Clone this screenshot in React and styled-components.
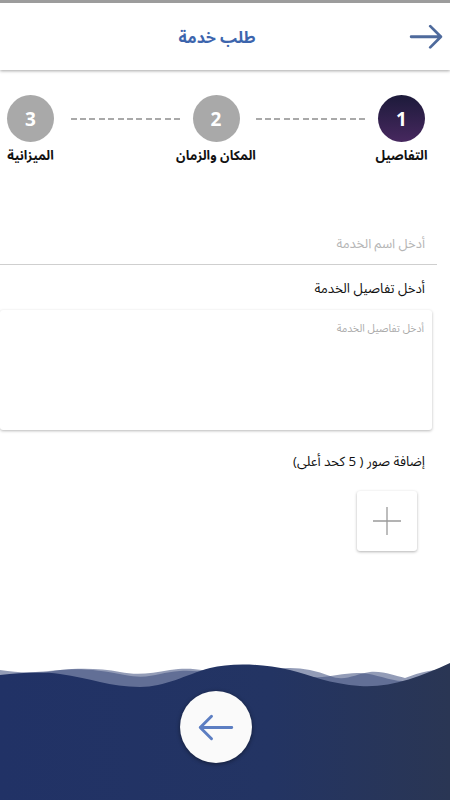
import React from 'react';
import styled, { createGlobalStyle } from 'styled-components';

const GlobalStyle = createGlobalStyle`
    html, body {
        margin: 0;
        padding: 0;
        background: #ffffff;
    }
    body {
        font-family: "Open Sans", "Noto Sans Arabic UI", sans-serif;
    }
    * {
        box-sizing: border-box;
    }
`;

const Page = styled.div`
    direction: rtl;
    width: 450px;
    min-height: 800px;
    display: flex;
    flex-direction: column;
    overflow: hidden;
`;

const Header = styled.header`
    height: 70px;
    border-top: 3px solid #9c9c9c;
    background: #ffffff;
    box-shadow: 0 1px 3px rgba(0, 0, 0, 0.35);
    display: flex;
    align-items: center;
    justify-content: center;
    position: relative;
    z-index: 1;
`;

const Title = styled.h1`
    margin: 0 16px 0 0;
    font-size: 16px;
    font-weight: 700;
    color: #3d65ad;
`;

const BackButton = styled.button`
    position: absolute;
    right: 6px;
    top: 50%;
    transform: translateY(-50%);
    border: 0;
    background: none;
    padding: 0;
    width: 36px;
    height: 30px;
    display: flex;
    align-items: center;
    justify-content: center;
    color: #4e6a9c;
`;

const StepRow = styled.div`
    display: flex;
    align-items: flex-start;
    padding: 25px 25px 0 7px;
`;

const Step = styled.div`
    width: 47px;
    display: flex;
    flex-direction: column;
    align-items: center;
    flex-shrink: 0;
`;

const StepCircle = styled.div`
    width: 47px;
    height: 47px;
    border-radius: 50%;
    display: flex;
    align-items: center;
    justify-content: center;
    color: #ffffff;
    font-size: 19px;
    font-weight: 700;
    font-family: "Open Sans", sans-serif;
    background: ${({ $active }) =>
        $active ? 'linear-gradient(180deg, #1c1a3a 0%, #47285f 100%)' : '#a9a9a9'};
`;

const StepLabel = styled.div`
    margin-top: 3px;
    white-space: nowrap;
    font-size: 13px;
    font-weight: 700;
    color: #111111;
    line-height: 20px;
`;

const Connector = styled.div`
    flex: 1;
    height: 2px;
    margin: 23px 13px 0;
    background: repeating-linear-gradient(to left, #a9a9a9 0 6px, transparent 6px 9.4px);
`;

const Form = styled.div`
    display: flex;
    flex-direction: column;
    align-items: flex-start;
    padding-top: 57px;
`;

const NameInput = styled.input`
    width: 437px;
    height: 43px;
    margin-right: 13px;
    border: 0;
    border-bottom: 1px solid #cfcfcf;
    padding: 0 12px;
    font-family: inherit;
    font-size: 13px;
    direction: rtl;
    outline: none;
    &::placeholder {
        color: #b5b5b5;
    }
`;

const FieldLabel = styled.div`
    padding-right: 25px;
    margin-top: ${({ $top }) => $top}px;
    font-size: 13.3px;
    line-height: 20px;
    color: #111111;
`;

const DetailsBox = styled.textarea`
    margin-top: 12px;
    margin-right: 18px;
    width: 432px;
    height: 120px;
    border: 0;
    border-radius: 3px;
    box-shadow: 0 1px 3px rgba(0, 0, 0, 0.28);
    padding: 10px 8px;
    resize: none;
    font-family: inherit;
    font-size: 10.5px;
    line-height: 16px;
    direction: rtl;
    outline: none;
    &::placeholder {
        color: #ababab;
    }
`;

const AddPhoto = styled.button`
    margin-top: 20px;
    margin-right: 33px;
    width: 60px;
    height: 60px;
    border: 0;
    border-radius: 3px;
    background: #ffffff;
    box-shadow: 0 1px 3px rgba(0, 0, 0, 0.3);
    display: flex;
    align-items: center;
    justify-content: center;
    color: #9a9a9a;
    padding: 0;
`;

const Footer = styled.footer`
    margin-top: auto;
    height: 138px;
    position: relative;
    display: flex;
    justify-content: center;
    padding-top: 29px;
    padding-right: 18px;
`;

const Wave = styled.svg`
    position: absolute;
    inset: 0;
    width: 100%;
    height: 100%;
`;

const NextButton = styled.button`
    position: relative;
    width: 72px;
    height: 72px;
    border-radius: 50%;
    border: 0;
    background: #fafafa;
    box-shadow: 0 1px 4px rgba(0, 0, 0, 0.45);
    display: flex;
    align-items: center;
    justify-content: center;
    color: #5c7ec2;
    padding: 0;
`;

const steps = [
    { n: 1, label: 'التفاصيل', active: true },
    { n: 2, label: 'المكان والزمان' },
    { n: 3, label: 'الميزانية' },
];

function Arrow({ dir = 'right', size = 32, stroke = 2.6 }) {
    const d = dir === 'right' ? 'M2 12 H30 M20 2 L30 12 L20 22' : 'M30 12 H2 M12 2 L2 12 L12 22';
    return (
        <svg width={size} height={(size * 24) / 32} viewBox="0 0 32 24" fill="none">
            <path d={d} stroke="currentColor" strokeWidth={stroke} strokeLinecap="round" strokeLinejoin="round" />
        </svg>
    );
}

export default function App() {
    return (
        <>
            <GlobalStyle />
            <Page>
                <Header>
                    <Title>طلب خدمة</Title>
                    <BackButton>
                        <Arrow dir="right" size={34} />
                    </BackButton>
                </Header>

                <StepRow>
                    {steps.map((s, i) => (
                        <React.Fragment key={s.n}>
                            {i > 0 && <Connector />}
                            <Step>
                                <StepCircle $active={s.active}>{s.n}</StepCircle>
                                <StepLabel>{s.label}</StepLabel>
                            </Step>
                        </React.Fragment>
                    ))}
                </StepRow>

                <Form>
                    <NameInput placeholder="أدخل اسم الخدمة" />
                    <FieldLabel $top={13}>أدخل تفاصيل الخدمة</FieldLabel>
                    <DetailsBox placeholder="أدخل تفاصيل الخدمة" />
                    <FieldLabel $top={21}>إضافة صور ( 5 كحد أعلى)</FieldLabel>
                    <AddPhoto>
                        <svg width="30" height="30" viewBox="0 0 30 30">
                            <path d="M15 1 V29 M1 15 H29" stroke="currentColor" strokeWidth="1.3" />
                        </svg>
                    </AddPhoto>
                </Form>

                <Footer>
                    <Wave viewBox="0 0 450 138" preserveAspectRatio="none">
                        <defs>
                            <linearGradient id="sea" x1="0" y1="0" x2="1" y2="0">
                                <stop offset="0" stopColor="#213266" />
                                <stop offset="0.6" stopColor="#233463" />
                                <stop offset="1" stopColor="#2a3654" />
                            </linearGradient>
                        </defs>
                        <path
                            d="M0,8 C25,12 40,10 60,8 C80,6 100,8 125,13 C150,18 160,10 180,9 C200,8 215,12 230,16 L230,40 L0,40 Z"
                            fill="#3b4a7c"
                            opacity="0.55"
                        />
                        <path
                            d="M40,12 C60,6 95,5 120,10 C135,13 150,12 170,8 C190,5 205,8 220,12 L220,40 L40,40 Z"
                            fill="#3b4a7c"
                            opacity="0.55"
                        />
                        <path
                            d="M270,8 C290,4 310,6 330,14 C345,20 355,12 370,10 C385,9 395,14 405,16 C420,10 435,7 450,7 L450,40 L270,40 Z"
                            fill="#3b4a7c"
                            opacity="0.55"
                        />
                        <path
                            d="M300,12 C320,20 340,10 360,11 C380,12 395,22 410,18 C425,14 440,8 450,9 L450,40 L300,40 Z"
                            fill="#3b4a7c"
                            opacity="0.55"
                        />
                        <path
                            d="M0,13 C20,11 40,9 60,12 C90,16 110,25 140,25 C165,25 185,13 210,6 C230,1 260,1 290,8 C310,13 330,22 360,24 C390,26 420,15 450,1 L450,138 L0,138 Z"
                            fill="url(#sea)"
                        />
                    </Wave>
                    <NextButton>
                        <Arrow dir="left" size={36} stroke={2.6} />
                    </NextButton>
                </Footer>
            </Page>
        </>
    );
}
